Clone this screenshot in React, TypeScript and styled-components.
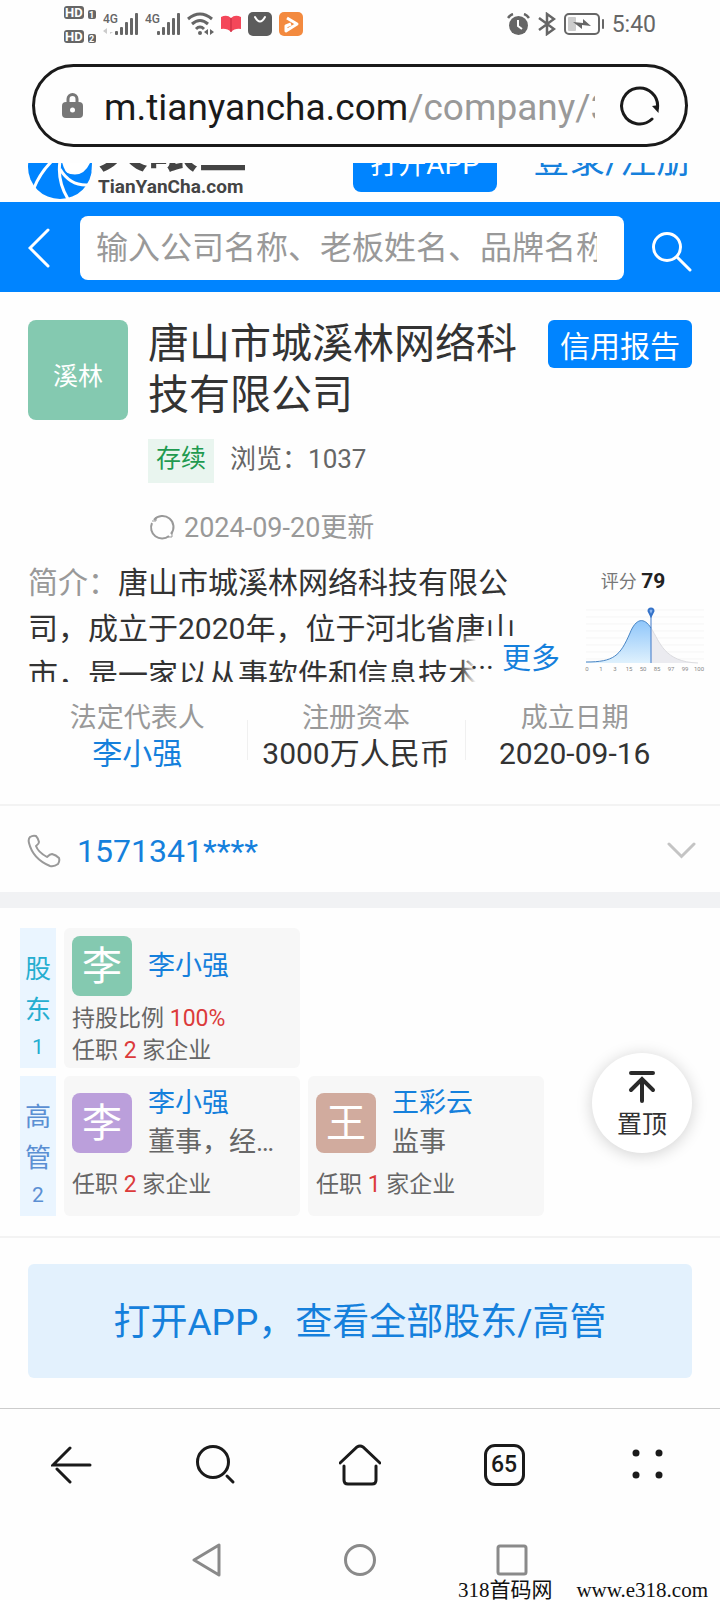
import React from "react";
import styled, { createGlobalStyle } from "styled-components";

const blue = "#0084ff";
const linkBlue = "#1580dc";

const GlobalStyle = createGlobalStyle`
  * { box-sizing: border-box; }
  body {
    margin: 0;
    background: #fefefe;
    color: #333;
    font-family: Roboto, "Noto Sans CJK SC", sans-serif;
  }
  button, input { font-family: inherit; }
  button { border: 0; padding: 0; background: none; cursor: pointer; }
  a { color: inherit; text-decoration: none; }
  h1, h2, p, dl, dt, dd { margin: 0; font-weight: 400; }
  svg { display: block; flex: none; }
`;

const Page = styled.div`
  position: relative;
  min-height: 100vh;
  display: flex;
  flex-direction: column;
  overflow: hidden;
`;

/* ---------- status bar ---------- */

const StatusBar = styled.header`
  display: flex;
  justify-content: space-between;
  align-items: center;
  height: 48px;
  padding: 0 64px;
`;

const StatusGroup = styled.div<{ $gap: number }>`
  display: flex;
  align-items: center;
  gap: ${(p) => p.$gap}px;
`;

const Clock = styled.time`
  padding-top: 2px;
  font-size: 23px;
  line-height: 28px;
  color: #666;
`;

/* ---------- address bar ---------- */

const AddressBar = styled.div`
  display: flex;
  align-items: center;
  margin: 16px 32px;
  height: 83px;
  padding: 0 25px 0 27px;
  border: 3px solid #1a1a1a;
  border-radius: 42px;
`;

const Address = styled.button`
  flex: 1;
  min-width: 0;
  margin: 0 25px 0 21px;
  padding-top: 4px;
  overflow: hidden;
  white-space: nowrap;
  text-align: left;
  font-size: 37px;
  line-height: 48px;
  color: #1a1a1a;
`;

const AddressPath = styled.span`
  color: #999;
`;

/* ---------- site header ---------- */

const SiteHeaderWindow = styled.div`
  display: flex;
  align-items: flex-end;
  height: 39px;
  overflow: hidden;
`;

const SiteHeader = styled.div`
  flex: 1;
  display: flex;
  align-items: flex-end;
  height: 92px;
  padding: 0 28px;
`;

const Brand = styled.a`
  display: flex;
  align-items: flex-end;
  gap: 6px;
  padding-bottom: 3px;
`;

const BrandText = styled.span`
  display: flex;
  flex-direction: column;
  color: #444;
  font-weight: 700;
`;

const BrandName = styled.span`
  font-size: 50px;
  line-height: 50px;
`;

const BrandDomain = styled.span`
  font-size: 19px;
  line-height: 24px;
`;

const OpenApp = styled.button`
  height: 64px;
  width: 144px;
  margin: 0 36px 10px auto;
  padding-top: 4px;
  border-radius: 8px;
  background: ${blue};
  color: #fff;
  font-size: 28px;
`;

const Login = styled.a`
  margin-bottom: 15px;
  font-size: 36px;
  line-height: 52px;
  color: ${linkBlue};
`;

const SearchBar = styled.form`
  display: flex;
  align-items: center;
  height: 90px;
  padding: 2px 28px 0;
  background: ${blue};
`;

const SearchInput = styled.input`
  flex: 1;
  min-width: 0;
  height: 64px;
  margin: 0 28px 0 30px;
  padding: 0 27px 0 16px;
  border: 0;
  border-radius: 8px;
  background: #fff;
  font-size: 32px;
  color: #333;
  outline: none;
  &::placeholder { color: #999; opacity: 1; }
`;

const SearchButton = styled.button`
  padding-top: 8px;
`;

/* ---------- company summary ---------- */

const Company = styled.section`
  display: flex;
  align-items: flex-start;
  padding: 28px 28px 0;
`;

const CompanyLogo = styled.div`
  display: flex;
  align-items: center;
  justify-content: center;
  width: 100px;
  height: 100px;
  padding-top: 8px;
  border-radius: 8px;
  background: #84c9b0;
  color: #fff;
  font-size: 25px;
`;

const CompanyInfo = styled.div`
  flex: 1;
  min-width: 0;
  margin: 0 20px;
`;

const CompanyName = styled.h1`
  margin-top: -1px;
  font-size: 41px;
  line-height: 51px;
`;

const ReportButton = styled.button`
  width: 144px;
  height: 48px;
  border-radius: 6px;
  background: ${blue};
  color: #fff;
  font-size: 30px;
`;

const Tags = styled.div`
  display: flex;
  align-items: flex-start;
  gap: 16px;
  margin-top: 18px;
  font-size: 26px;
  line-height: 40px;
  color: #666;
`;

const StatusTag = styled.span`
  padding: 0 8px 4px;
  background: #e9f5ef;
  color: #1f9a50;
  font-size: 25px;
`;

const Updated = styled.p`
  display: flex;
  align-items: center;
  gap: 8px;
  margin-top: 27px;
  font-size: 27px;
  line-height: 36px;
  color: #999;
`;

const Profile = styled.section`
  display: flex;
  justify-content: space-between;
  padding: 14px 14px 0 28px;
`;

const Intro = styled.div`
  position: relative;
  flex: 1;
  max-width: 532px;
  height: 122px;
  padding-right: 40px;
  overflow: hidden;
  font-size: 30px;
  line-height: 46px;
`;

const IntroLabel = styled.span`
  color: #999;
`;

const More = styled.div`
  position: absolute;
  right: 0;
  bottom: 0;
  display: flex;
  gap: 8px;
  padding-left: 10px;
  background: linear-gradient(to right, rgba(254, 254, 254, 0), #fefefe 16px);
`;

const MoreLink = styled.a`
  color: ${linkBlue};
  font-size: 29px;
`;

const Score = styled.div`
  width: 122px;
`;

const ScoreLabel = styled.p`
  padding-top: 7px;
  padding-right: 24px;
  text-align: center;
  font-size: 18px;
  line-height: 28px;
  color: #777;
`;

const ScoreValue = styled.strong`
  font-size: 21px;
  color: #222;
`;

const ChartSlot = styled.div`
  padding-top: 10px;
`;

const Facts = styled.dl`
  display: grid;
  grid-template-columns: repeat(3, 1fr);
  padding: 18px 36px 32px 28px;
  border-bottom: 2px solid #f3f3f3;
`;

const Fact = styled.div`
  position: relative;
  text-align: center;
  white-space: nowrap;
  line-height: 36px;
  & + &::before {
    content: "";
    position: absolute;
    left: 0;
    top: 20px;
    bottom: 12px;
    border-left: 1px solid #f0f0f0;
  }
`;

const FactName = styled.dt`
  font-size: 27px;
  color: #999;
`;

const FactValue = styled.dd<{ $link?: boolean }>`
  font-size: 30px;
  color: ${(p) => (p.$link ? linkBlue : "#333")};
`;

const PhoneRow = styled.div`
  display: flex;
  align-items: center;
  height: 86px;
  padding: 3px 24px 0 27px;
`;

const PhoneLink = styled.a`
  flex: 1;
  margin-left: 16px;
  font-size: 32px;
  line-height: 40px;
  color: ${linkBlue};
`;

const Band = styled.div`
  height: 16px;
  background: #f1f2f4;
`;

/* ---------- shareholders and officers ---------- */

const People = styled.section`
  position: relative;
  display: flex;
  flex-direction: column;
  gap: 8px;
  padding: 20px 20px 20px;
  border-bottom: 2px solid #f3f3f3;
`;

const PeopleRow = styled.div`
  display: flex;
  gap: 8px;
  min-height: 140px;
`;

const SideLabel = styled.h2<{ $color: string }>`
  display: flex;
  flex-direction: column;
  align-items: center;
  width: 36px;
  padding-top: 21px;
  background: #eaf5ff;
  color: ${(p) => p.$color};
  font-size: 26px;
  line-height: 41px;
`;

const SideCount = styled.span`
  font-size: 21px;
  line-height: 32px;
`;

const Card = styled.article`
  width: 236px;
  padding: 8px 8px 0;
  border-radius: 6px;
  background: #f7f7f7;
`;

const CardHead = styled.div`
  display: flex;
  align-items: center;
  gap: 16px;
  padding-right: 12px;
  margin-bottom: 7px;
`;

const Avatar = styled.div<{ $color: string }>`
  flex: none;
  width: 60px;
  height: 60px;
  border-radius: 8px;
  background: ${(p) => p.$color};
  color: #fff;
  text-align: center;
  font-size: 40px;
  line-height: 62px;
`;

const CardNames = styled.div`
  min-width: 0;
  flex: 1;
  font-size: 27px;
  line-height: 39px;
  color: #666;
`;

const PersonLink = styled.a`
  display: block;
  color: ${linkBlue};
`;

const Role = styled.p`
  overflow: hidden;
  white-space: nowrap;
  text-overflow: ellipsis;
`;

const CardLine = styled.p`
  font-size: 23px;
  line-height: 32px;
  color: #666;
`;

const Figure = styled.span`
  color: #dc3b3b;
`;

const ToTop = styled.button`
  position: absolute;
  right: 28px;
  top: 145px;
  display: flex;
  flex-direction: column;
  align-items: center;
  gap: 3px;
  width: 100px;
  height: 100px;
  padding-top: 17px;
  border-radius: 50%;
  background: #fff;
  box-shadow: 0 2px 16px rgba(0, 0, 0, 0.18);
  color: #333;
  font-size: 25px;
  line-height: 36px;
`;

const AppPrompt = styled.div`
  padding: 26px 28px 30px;
`;

const AppPromptButton = styled.button`
  width: 100%;
  height: 114px;
  padding-bottom: 5px;
  border-radius: 6px;
  background: #e3f1fd;
  color: ${linkBlue};
  font-size: 37px;
`;

/* ---------- browser and system navigation ---------- */

const Toolbar = styled.nav`
  display: grid;
  grid-template-columns: repeat(5, 1fr);
  justify-items: center;
  align-items: center;
  height: 112px;
  border-top: 1px solid #ccc;
`;

const TabCount = styled.button`
  width: 41px;
  height: 42px;
  border: 3px solid #1a1a1a;
  border-radius: 11px;
  color: #1a1a1a;
  font-size: 23px;
  font-weight: 500;
`;

const SystemNav = styled.nav`
  display: flex;
  justify-content: center;
  align-items: center;
  gap: 120px;
  height: 80px;
`;

const SiteMark = styled.p`
  position: absolute;
  right: 12px;
  bottom: 0;
  display: flex;
  gap: 24px;
  font-family: "Liberation Serif", "Noto Sans CJK SC", serif;
  font-size: 21px;
  line-height: 20px;
  color: #111;
`;

/* ---------- icons ---------- */

const HdIcon = () => (
  <svg width="32" height="40" viewBox="0 0 32 40" fontFamily="Roboto" fontWeight="700" fill="#fff">
    {[1, 25].map((y, i) => (
      <g key={y}>
        <rect x="0" y={y + 1} width="20" height="13" rx="3" fill="#666" />
        <text x="1" y={y + 12} fontSize="13">HD</text>
        <rect x="24" y={y + 5} width="8" height="9" rx="2" fill="#666" />
        <text x="25" y={y + 13} fontSize="9">{i + 1}</text>
      </g>
    ))}
  </svg>
);

const SignalIcon = ({ data }: { data?: boolean }) => (
  <svg width="35" height="24" viewBox="0 0 35 24" fill="#666">
    <text x="0" y="11" fontSize="12" fontWeight="500" fontFamily="Roboto">4G</text>
    {data && <path d="M4 16v6l-4-3zM7 16v6l3-2h-3z" fill="#ccc" />}
    <rect x="12" y="19" width="3" height="4" rx="1" />
    <rect x="17" y="15" width="3" height="8" rx="1" />
    <rect x="22" y="10" width="3" height="13" rx="1" />
    <rect x="27" y="6" width="3" height="17" rx="1" />
    <rect x="32" y="1" width="3" height="22" rx="1" />
  </svg>
);

const WifiIcon = () => (
  <svg width="27" height="24" viewBox="0 0 27 24" fill="none" stroke="#666" strokeWidth="3">
    <path d="M1 7Q13 -3 25 7" />
    <path d="M5 12Q13 5 21 12" />
    <path d="M9 17Q13 13 17 17" />
    <circle cx="13" cy="21" r="2" fill="#666" stroke="none" />
    <path d="M21 17v6l-4-3zM23 17v6l4-3z" fill="#666" stroke="none" />
  </svg>
);

const BookIcon = () => (
  <svg width="20" height="18" viewBox="0 0 20 18">
    <path d="M0 2Q6-1 10 3Q14-1 20 2V14Q14 13 10 17Q6 13 0 14Z" fill="#f4475a" />
    <path d="M10 3V17" stroke="#c22a3e" />
  </svg>
);

const BagIcon = () => (
  <svg width="24" height="24" viewBox="0 0 24 24">
    <rect width="24" height="24" rx="5" fill="#5c5c5c" />
    <path d="M7 5Q12 14 17 5" fill="none" stroke="#fff" strokeWidth="2" strokeLinecap="round" />
  </svg>
);

const VideoIcon = () => (
  <svg width="24" height="24" viewBox="0 0 24 24">
    <rect width="24" height="24" rx="5" fill="#f38a3f" />
    <path d="M8 6L18 12L7 19V14L12 12" fill="none" stroke="#fff" strokeWidth="3" strokeLinejoin="round" />
  </svg>
);

const AlarmIcon = () => (
  <svg width="23" height="23" viewBox="0 0 23 23" fill="none">
    <circle cx="11.5" cy="12.5" r="9.5" fill="#666" />
    <path d="M1 5Q3 2 6 1M22 5Q20 2 17 1" stroke="#666" strokeWidth="2.5" />
    <path d="M11 7V13L15 16" stroke="#fff" strokeWidth="2" />
  </svg>
);

const BluetoothIcon = () => (
  <svg width="18" height="24" viewBox="0 0 18 24" fill="none" stroke="#666" strokeWidth="2.5">
    <path d="M1 6L16 17L9 22V2L16 7L1 18" />
  </svg>
);

const BatteryIcon = () => (
  <svg width="40" height="22" viewBox="0 0 40 22">
    <rect x="1" y="1" width="34" height="20" rx="4" fill="none" stroke="#666" strokeWidth="2" />
    <rect x="4" y="4" width="8" height="14" rx="1" fill="#ccc" />
    <path d="M9 9L19 10V6L27 13L18 12V16Z" fill="#666" />
    <rect x="38" y="6" width="2" height="10" rx="1" fill="#666" />
  </svg>
);

const LockIcon = () => (
  <svg width="21" height="27" viewBox="0 0 21 27">
    <path d="M6 11V7a4.5 4.5 0 0 1 9 0V11" fill="none" stroke="#777" strokeWidth="3" />
    <rect x="0" y="10" width="21" height="16" rx="4" fill="#777" />
    <circle cx="10.5" cy="18" r="2.5" fill="#fff" />
  </svg>
);

const ReloadIcon = () => (
  <svg width="40" height="40" viewBox="0 0 40 40" fill="none" stroke="#1a1a1a" strokeWidth="3">
    <path d="M32 33A18 18 0 1 1 37.5 22" strokeLinecap="round" />
    <path d="M32 20L38.5 27L39 19Z" fill="#1a1a1a" stroke="none" />
  </svg>
);

const BrandIcon = () => (
  <svg width="64" height="64" viewBox="0 0 64 64">
    <circle cx="32" cy="32" r="32" fill={blue} />
    <path d="M33 18H66V30Q62 48 42 40Q34 36 33 18Z" fill="#fff" />
    <path d="M37 37Q54 45 62 28H64Q64 42 58 48Q46 49 37 37Z" fill={blue} />
    <g fill="none" stroke="#fff" strokeWidth="3">
      <path d="M6 53Q12 38 24 26" />
      <path d="M40 64Q29 46 32 26" />
      <path d="M32 34Q42 51 60 50" />
    </g>
  </svg>
);

const BackIcon = () => (
  <svg width="22" height="40" viewBox="0 0 22 40" fill="none" stroke="#fff" strokeWidth="3" strokeLinecap="round">
    <path d="M20 2L2 20L20 38" />
  </svg>
);

const SearchIcon = () => (
  <svg width="40" height="40" viewBox="0 0 40 40" fill="none" stroke="#fff" strokeWidth="3" strokeLinecap="round">
    <circle cx="15" cy="15" r="13.5" />
    <path d="M25 25L38 38" />
  </svg>
);

const RefreshIcon = () => (
  <svg width="28" height="28" viewBox="0 0 28 28" fill="none" stroke="#999" strokeWidth="2">
    <path d="M6 6A11 11 0 0 1 23 20M21 22A11 11 0 0 1 4 9" />
    <path d="M4 7H8V3M24 19V23H20" strokeWidth="1" />
  </svg>
);

const ScoreChart = () => (
  <svg width="122" height="66" viewBox="0 0 122 66">
    <defs>
      <linearGradient id="area" x1="0" y1="0" x2="0" y2="1">
        <stop offset="0" stopColor="#8fc6fa" />
        <stop offset="1" stopColor="#dff1fd" />
      </linearGradient>
    </defs>
    {[4, 11, 18, 25, 32, 39, 46, 53].map((y) => (
      <path key={y} d={`M2 ${y}H120`} stroke="#f5f5f5" />
    ))}
    <path d="M67 22C76 36 80 56 114 57H67Z" fill="#ebebf0" />
    <path d="M67 22C76 36 80 56 114 57" fill="none" stroke="#dcdce0" />
    <path d="M2 56C30 56 36 50 46 27C52 12 60 11 67 22V57H2Z" fill="url(#area)" />
    <path d="M2 56C30 56 36 50 46 27C52 12 60 11 67 22" fill="none" stroke="#4a86c5" />
    <path d="M67 8V57" stroke="#3f78c8" />
    <path d="M67 10L64.5 5A2.5 2.5 0 1 1 69.5 5Z" fill="#8ab4ee" stroke="#3573c9" strokeWidth="2" />
    <g fontSize="6" fill="#888" textAnchor="middle" fontFamily="Roboto">
      {["0", "1", "3", "15", "50", "85", "97", "99", "100"].map((t, i) => (
        <text key={t} x={3 + i * 14} y="65">{t}</text>
      ))}
    </g>
  </svg>
);

const PhoneIcon = () => (
  <svg width="34" height="34" viewBox="0 0 34 34" fill="none" stroke="#999" strokeWidth="2" strokeLinejoin="round">
    <path d="M3 3Q6 1 9 2Q11 4 12 8Q12 10 9 12Q11 18 20 23Q23 20 25 20Q29 21 32 24Q33 27 31 30Q27 33 23 32Q6 25 2 9Q1 5 3 3Z" />
  </svg>
);

const ChevronDownIcon = () => (
  <svg width="29" height="17" viewBox="0 0 29 17" fill="none" stroke="#c4c4c4" strokeWidth="3" strokeLinecap="round">
    <path d="M2 2L14.5 14.5L27 2" />
  </svg>
);

const ToTopIcon = () => (
  <svg width="28" height="34" viewBox="0 0 28 34" fill="none" stroke="#2a2a2a" strokeWidth="4" strokeLinecap="round">
    <path d="M3 3H25M14 10V31M3 20L14 9L25 20" />
  </svg>
);

const ToolIcon = ({ children }: { children: React.ReactNode }) => (
  <svg width="42" height="42" viewBox="0 0 42 42" fill="none" stroke="#1a1a1a" strokeWidth="3" strokeLinecap="round">
    {children}
  </svg>
);

const SystemIcon = ({ children }: { children: React.ReactNode }) => (
  <svg width="32" height="34" viewBox="0 0 32 34" fill="none" stroke="#8a8a8a" strokeWidth="3" strokeLinejoin="round">
    {children}
  </svg>
);

/* ---------- page ---------- */

type PersonProps = {
  name: string;
  avatarColor: string;
  role?: string;
  share?: string;
  jobs: number;
};

const Person = ({ name, avatarColor, role, share, jobs }: PersonProps) => (
  <Card>
    <CardHead>
      <Avatar $color={avatarColor}>{name[0]}</Avatar>
      <CardNames>
        <PersonLink href="#">{name}</PersonLink>
        {role && <Role>{role}</Role>}
      </CardNames>
    </CardHead>
    {share && (
      <CardLine>
        持股比例 <Figure>{share}</Figure>
      </CardLine>
    )}
    <CardLine>
      任职 <Figure>{jobs}</Figure> 家企业
    </CardLine>
  </Card>
);

export default function App() {
  return (
    <>
      <GlobalStyle />
      <Page>
        <StatusBar>
          <StatusGroup $gap={7}>
            <HdIcon />
            <SignalIcon data />
            <SignalIcon />
            <WifiIcon />
            <BookIcon />
            <BagIcon />
            <VideoIcon />
          </StatusGroup>
          <StatusGroup $gap={8}>
            <AlarmIcon />
            <BluetoothIcon />
            <BatteryIcon />
            <Clock>5:40</Clock>
          </StatusGroup>
        </StatusBar>

        <AddressBar>
          <LockIcon />
          <Address>
            m.tianyancha.com<AddressPath>/company/3</AddressPath>
          </Address>
          <button aria-label="刷新">
            <ReloadIcon />
          </button>
        </AddressBar>

        <SiteHeaderWindow>
          <SiteHeader>
            <Brand href="#">
              <BrandIcon />
              <BrandText>
                <BrandName>天眼查</BrandName>
                <BrandDomain>TianYanCha.com</BrandDomain>
              </BrandText>
            </Brand>
            <OpenApp>打开APP</OpenApp>
            <Login href="#">登录/注册</Login>
          </SiteHeader>
        </SiteHeaderWindow>

        <SearchBar onSubmit={(e) => e.preventDefault()}>
          <button type="button" aria-label="返回">
            <BackIcon />
          </button>
          <SearchInput aria-label="搜索" placeholder="输入公司名称、老板姓名、品牌名称" />
          <SearchButton aria-label="搜索">
            <SearchIcon />
          </SearchButton>
        </SearchBar>

        <Company>
          <CompanyLogo>溪林</CompanyLogo>
          <CompanyInfo>
            <CompanyName>唐山市城溪林网络科技有限公司</CompanyName>
            <Tags>
              <StatusTag>存续</StatusTag>
              <span>浏览：1037</span>
            </Tags>
            <Updated>
              <RefreshIcon />
              2024-09-20更新
            </Updated>
          </CompanyInfo>
          <ReportButton>信用报告</ReportButton>
        </Company>

        <Profile>
          <Intro>
            <p>
              <IntroLabel>简介：</IntroLabel>
              唐山市城溪林网络科技有限公司，成立于2020年，位于河北省唐山市，是一家以从事软件和信息技术
            </p>
            <More>
              <span>...</span>
              <MoreLink href="#">更多</MoreLink>
            </More>
          </Intro>
          <Score>
            <ScoreLabel>
              评分 <ScoreValue>79</ScoreValue>
            </ScoreLabel>
            <ChartSlot>
              <ScoreChart />
            </ChartSlot>
          </Score>
        </Profile>

        <Facts>
          <Fact>
            <FactName>法定代表人</FactName>
            <FactValue $link>
              <a href="#">李小强</a>
            </FactValue>
          </Fact>
          <Fact>
            <FactName>注册资本</FactName>
            <FactValue>3000万人民币</FactValue>
          </Fact>
          <Fact>
            <FactName>成立日期</FactName>
            <FactValue>2020-09-16</FactValue>
          </Fact>
        </Facts>

        <PhoneRow>
          <PhoneIcon />
          <PhoneLink href="#">1571341****</PhoneLink>
          <button aria-label="展开">
            <ChevronDownIcon />
          </button>
        </PhoneRow>
        <Band />

        <People>
          <PeopleRow>
            <SideLabel $color="#25aed0">
              <span>股</span>
              <span>东</span>
              <SideCount>1</SideCount>
            </SideLabel>
            <Person name="李小强" avatarColor="#84c9b0" share="100%" jobs={2} />
          </PeopleRow>
          <PeopleRow>
            <SideLabel $color="#5b8fd3">
              <span>高</span>
              <span>管</span>
              <SideCount>2</SideCount>
            </SideLabel>
            <Person name="李小强" avatarColor="#bb9fdb" role="董事，经理" jobs={2} />
            <Person name="王彩云" avatarColor="#d1ab9e" role="监事" jobs={1} />
          </PeopleRow>
          <ToTop>
            <ToTopIcon />
            置顶
          </ToTop>
        </People>

        <AppPrompt>
          <AppPromptButton>打开APP，查看全部股东/高管</AppPromptButton>
        </AppPrompt>

        <Toolbar>
          <button aria-label="后退">
            <ToolIcon>
              <path d="M19 4L2 21H39M6 25L19 38" />
            </ToolIcon>
          </button>
          <button aria-label="搜索">
            <ToolIcon>
              <circle cx="18" cy="18" r="15.5" />
              <path d="M32 32L38 38" />
            </ToolIcon>
          </button>
          <button aria-label="主页">
            <ToolIcon>
              <path d="M1 19L18 3Q21 1 24 3L41 19M5 22V36Q5 40 9 40H33Q37 40 37 36V22" />
            </ToolIcon>
          </button>
          <TabCount aria-label="标签页">65</TabCount>
          <button aria-label="菜单">
            <ToolIcon>
              <g fill="#1a1a1a" stroke="none">
                <circle cx="9" cy="9" r="3.5" />
                <circle cx="32" cy="9" r="3.5" />
                <circle cx="9" cy="31" r="3.5" />
                <circle cx="32" cy="31" r="3.5" />
              </g>
            </ToolIcon>
          </button>
        </Toolbar>

        <SystemNav>
          <button aria-label="系统返回">
            <SystemIcon>
              <path d="M2 17L27 2V32Z" />
            </SystemIcon>
          </button>
          <button aria-label="系统主页">
            <SystemIcon>
              <circle cx="16" cy="17" r="14.5" />
            </SystemIcon>
          </button>
          <button aria-label="最近任务">
            <SystemIcon>
              <rect x="2" y="3" width="28" height="28" rx="2" />
            </SystemIcon>
          </button>
        </SystemNav>
        <SiteMark>
          <span>318首码网</span>
          <span>www.e318.com</span>
        </SiteMark>
      </Page>
    </>
  );
}
